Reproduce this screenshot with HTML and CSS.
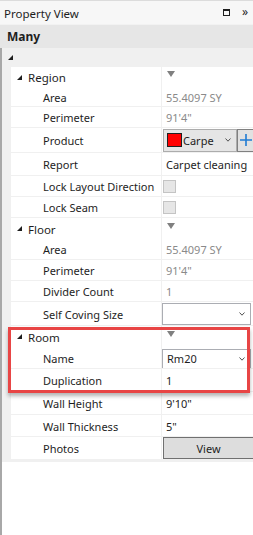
FILE: index.html
```html
<!DOCTYPE html>
<html>
<head>
<meta charset="utf-8">
<link rel="stylesheet" href="styles.css">
</head>
<body>
<div class="window">
  <div class="titlebar">
    <span class="title">Property View</span>
    <span class="tb-icons">
      <svg class="tb-max" width="7" height="7" viewBox="0 0 7 7"><rect x="0.5" y="0.5" width="6" height="6" fill="none" stroke="#1e1e1e" stroke-width="1"/><rect x="0" y="0" width="7" height="2" fill="#1e1e1e"/></svg>
      <span class="tb-more">»</span>
    </span>
  </div>
  <div class="header">Many</div>
  <div class="panel">
    <div class="toprow"><svg class="tri" width="5" height="5" viewBox="0 0 5 5"><polygon points="5,0 5,5 0,5" fill="#1e1e1e"/></svg></div>
    <div class="grid">
      <div class="row cat r20"><div class="name"><svg class="tri" width="5" height="5" viewBox="0 0 5 5"><polygon points="5,0 5,5 0,5" fill="#1e1e1e"/></svg>Region</div><div class="val"><svg class="down" width="8" height="6" viewBox="0 0 8 6"><polygon points="0,0 8,0 4,6" fill="#808080"/></svg></div></div>
      <div class="row r20"><div class="name">Area</div><div class="val ro">55.4097 SY</div></div>
      <div class="row r21"><div class="name">Perimeter</div><div class="val ro">91'4"</div></div>
      <div class="row r25"><div class="name">Product</div><div class="val">
        <div class="combo gray"><span class="swatch"></span><span class="ctext">Carpe</span><svg class="chev" width="6" height="4" viewBox="0 0 6 4"><polyline points="0.5,0.5 3,3.2 5.5,0.5" fill="none" stroke="#505050" stroke-width="1"/></svg></div>
        <div class="plus"><svg width="12" height="12" viewBox="0 0 12 12"><path d="M6 0V12M0 6H12" stroke="#1f7bd3" stroke-width="1.6"/></svg></div>
      </div></div>
      <div class="row r23"><div class="name">Report</div><div class="val">Carpet cleaning</div></div>
      <div class="row r21"><div class="name">Lock Layout Direction</div><div class="val"><span class="check"></span></div></div>
      <div class="row r21"><div class="name">Lock Seam</div><div class="val"><span class="check"></span></div></div>
      <div class="row cat r21"><div class="name"><svg class="tri" width="5" height="5" viewBox="0 0 5 5"><polygon points="5,0 5,5 0,5" fill="#1e1e1e"/></svg>Floor</div><div class="val"><svg class="down" width="8" height="6" viewBox="0 0 8 6"><polygon points="0,0 8,0 4,6" fill="#808080"/></svg></div></div>
      <div class="row r21"><div class="name">Area</div><div class="val ro">55.4097 SY</div></div>
      <div class="row r21"><div class="name">Perimeter</div><div class="val ro">91'4"</div></div>
      <div class="row r21"><div class="name">Divider Count</div><div class="val ro">1</div></div>
      <div class="row r24"><div class="name">Self Coving Size</div><div class="val"><div class="combo white"><span class="ctext"></span><svg class="chev" width="6" height="4" viewBox="0 0 6 4"><polyline points="0.5,0.5 3,3.2 5.5,0.5" fill="none" stroke="#505050" stroke-width="1"/></svg></div></div></div>
      <div class="highlight">
        <div class="row cat r21"><div class="name"><svg class="tri" width="5" height="5" viewBox="0 0 5 5"><polygon points="5,0 5,5 0,5" fill="#1e1e1e"/></svg>Room</div><div class="val"><svg class="down" width="8" height="6" viewBox="0 0 8 6"><polygon points="0,0 8,0 4,6" fill="#808080"/></svg></div></div>
        <div class="row r22"><div class="name">Name</div><div class="val"><div class="combo white name-combo"><span class="ctext">Rm20</span><svg class="chev" width="6" height="4" viewBox="0 0 6 4"><polyline points="0.5,0.5 3,3.2 5.5,0.5" fill="none" stroke="#505050" stroke-width="1"/></svg></div></div></div>
        <div class="row r23"><div class="name">Duplication</div><div class="val">1</div></div>
      </div>
      <div class="row r23"><div class="name">Wall Height</div><div class="val">9'10"</div></div>
      <div class="row r22"><div class="name">Wall Thickness</div><div class="val">5"</div></div>
      <div class="row r23"><div class="name">Photos</div><div class="val"><div class="btn">View</div></div></div>
    </div>
  </div>
</div>
</body>
</html>
```

FILE: styles.css
```css
html, body {
  margin: 0;
  padding: 0;
  background: #ffffff;
}
body {
  font-family: "Noto Sans", "Open Sans", sans-serif;
  font-size: 11px;
  color: #1e1e1e;
  width: 253px;
  height: 535px;
  overflow: hidden;
}
.window {
  display: flex;
  flex-direction: column;
  height: 535px;
}
.titlebar {
  height: 23px;
  border-top: 1px solid #dcdcdc;
  background: #f7f7f7;
  display: flex;
  align-items: center;
  justify-content: space-between;
  padding: 0 4px 0 4px;
  border-bottom: 1px solid #f2f2f2;
}
.title {
  font-size: 11.5px;
  padding-top: 1px;
}
.tb-icons {
  display: flex;
  align-items: center;
  gap: 12px;
  padding-right: 1px;
}
.tb-more {
  font-size: 12px;
  line-height: 1;
  margin-top: -2px;
}
.header {
  height: 23px;
  background: #e6e6e6;
  font-weight: bold;
  font-size: 12px;
  display: flex;
  align-items: center;
  padding-left: 7px;
}
.panel {
  flex: 1;
  border-left: 2px solid #a8a8a8;
  display: flex;
  flex-direction: column;
}
.toprow {
  height: 19px;
  background: #f0f0f0;
  display: flex;
  align-items: center;
  padding-left: 6px;
}
.grid {
  background: #f0f0f0;
  padding-left: 9px;
  padding-bottom: 2px;
}
.row {
  display: grid;
  grid-template-columns: 150px 1fr;
  background: #ffffff;
  border-bottom: 1px solid #f0f0f0;
  box-sizing: border-box;
}
.row.cat {
  border-bottom: none;
}
.r20 { height: 20px; }
.r21 { height: 21px; }
.r22 { height: 22px; }
.r23 { height: 23px; }
.r24 { height: 24px; }
.r25 { height: 25px; }
.name {
  display: flex;
  align-items: center;
  padding-left: 32px;
  padding-top: 1px;
  white-space: nowrap;
  overflow: hidden;
}
.cat .name {
  padding-left: 6px;
  gap: 6px;
  font-size: 11.5px;
}
.cat .name .tri {
  margin-top: -1px;
}
.val {
  border-left: 1px solid #f0f0f0;
  display: flex;
  align-items: center;
  padding-left: 4px;
  padding-top: 1px;
  white-space: nowrap;
  overflow: hidden;
}
.val.ro {
  color: #8a8a8a;
}
.down {
  margin-left: 1px;
  margin-top: -6px;
}
.cat .val {
  padding-top: 0;
}
.combo {
  box-sizing: border-box;
  display: flex;
  align-items: center;
  position: relative;
  overflow: hidden;
}
.combo.gray {
  margin-left: -3px;
  margin-top: -1px;
  width: 75px;
  height: 23px;
  background: #e5e5e5;
  border: 1px solid #acacac;
  padding-left: 3px;
}
.swatch {
  width: 15px;
  height: 14px;
  box-sizing: border-box;
  background: #ff0000;
  border: 1px solid #202020;
  flex: none;
}
.ctext {
  flex: 1;
  overflow: hidden;
  white-space: nowrap;
}
.combo.gray .ctext {
  padding-left: 1px;
}
.chev {
  flex: none;
  margin-right: 5px;
  margin-left: auto;
}
.combo.white {
  margin-left: -4px;
  margin-top: -1px;
  width: 89px;
  height: 22px;
  background: #ffffff;
  border: 1px solid #abadb3;
  padding-left: 4px;
}
.combo.name-combo {
  height: 20px;
  margin-top: 1px;
}
.plus {
  width: 16px;
  height: 23px;
  margin-top: -1px;
  box-sizing: border-box;
  border: 1px solid #808080;
  border-right: none;
  background: #e1e1e1;
  display: flex;
  align-items: center;
  justify-content: center;
  flex: none;
}
.check {
  width: 13px;
  height: 13px;
  box-sizing: border-box;
  background: #e6e6e6;
  border: 1px solid #c4c4c4;
  margin-left: -3px;
}
.btn {
  box-sizing: border-box;
  margin-left: -3px;
  margin-top: -1px;
  width: 91px;
  height: 22px;
  background: #dddddd;
  border: 1px solid #707070;
  border-right: none;
  display: flex;
  align-items: center;
  justify-content: center;
}
.highlight {
  position: relative;
}
.highlight::after {
  content: "";
  position: absolute;
  left: -3px;
  right: 3px;
  top: 1px;
  bottom: -1px;
  border: 3px solid #e84545;
  box-shadow: 0 3px 4px rgba(0, 0, 0, 0.3);
  pointer-events: none;
}
```
